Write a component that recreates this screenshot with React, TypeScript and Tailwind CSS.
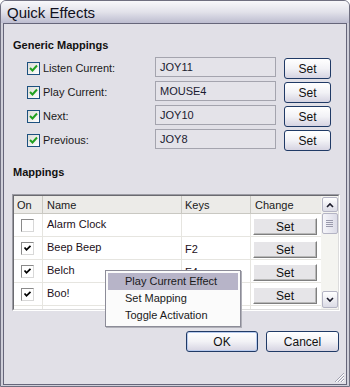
import React from "react";

const font = { fontFamily: '"Liberation Sans", Arial, sans-serif' };

function XpCheck() {
  return (
    <div className="w-[13px] h-[13px] border border-[#1c5180] bg-gradient-to-br from-[#dcdcd7] to-[#ffffff] flex items-center justify-center shrink-0">
      <svg width="9" height="9" viewBox="0 0 9 9">
        <path d="M1 4 L3.5 6.5 L8 1.5" stroke="#21a121" strokeWidth="2" fill="none" />
      </svg>
    </div>
  );
}

function ClassicCheck({ checked }: { checked: boolean }) {
  return (
    <div className="w-[13px] h-[13px] border border-t-[#8a8a8a] border-l-[#8a8a8a] border-r-[#d8d8d8] border-b-[#d8d8d8] bg-white flex items-center justify-center shrink-0">
      {checked && (
        <svg width="9" height="9" viewBox="0 0 9 9">
          <path d="M1.5 3.5 L3.5 5.8 L7.5 1.8" stroke="#000" strokeWidth="1.8" fill="none" />
        </svg>
      )}
    </div>
  );
}

function XpButton({ label, w, h, def }: { label: string; w: string; h: string; def?: boolean }) {
  return (
    <div
      className={`${w} ${h} rounded-[3px] border border-[#203a66] bg-gradient-to-b from-[#ffffff] via-[#f2f2f6] to-[#d6d4e2] flex items-center justify-center text-[12px] text-[#111] shrink-0 ${def ? "shadow-[inset_0_0_0_1px_#b8cbee]" : ""}`}
    >
      {label}
    </div>
  );
}

function ClassicSet() {
  return (
    <div className="w-[64px] h-[17px] mt-[4px] ml-[2px] border border-t-[#ffffff] border-l-[#ffffff] border-r-[#7f7f7f] border-b-[#7f7f7f] bg-[#e6e5e8] shadow-[inset_-1px_-1px_0_#b8b8b8] flex items-center justify-center text-[12px] text-[#111]">
      Set
    </div>
  );
}

const generic = [
  ["Listen Current:", "JOY11"],
  ["Play Current:", "MOUSE4"],
  ["Next:", "JOY10"],
  ["Previous:", "JOY8"],
];

const rows: [boolean, string, string][] = [
  [false, "Alarm Clock", ""],
  [true, "Beep Beep", "F2"],
  [true, "Belch", "F4"],
  [true, "Boo!", ""],
  [false, "Buzzer", ""],
];

export default function App() {
  return (
    <div style={font} className="w-[350px] h-[387px] bg-[#cfcfd9] border border-[#6f6f80] rounded-t-[6px] flex flex-col overflow-hidden">
      <div className="h-[22px] bg-gradient-to-b from-[#f8f8fb] via-[#e2e2ea] to-[#bdbdd0] pl-[6px] pt-[3px] text-[15px] leading-[18px] text-[#101020] shrink-0">
        Quick Effects
      </div>
      <div className="relative flex-1 mx-[2px] mb-[1px] border border-[#66667a] bg-[#e1e0e7] flex flex-col">
        <div className="pl-[9px] pt-[14px] text-[11px] font-bold leading-[14px] text-[#111]">Generic Mappings</div>
        <div className="flex flex-col gap-[2px] mt-[5px]">
          {generic.map(([l, v]) => (
            <div key={l} className="h-[22px] flex items-start">
              <div className="ml-[23px] mt-[5px]">
                <XpCheck />
              </div>
              <div className="ml-[3px] mt-[5px] w-[112px] text-[11px] leading-[13px] text-[#1a1a1a]">{l}</div>
              <div className="w-[121px] h-[20px] border border-[#a4a4ae] bg-[#e4e3e9] pl-[4px] text-[11px] leading-[18px] text-[#1a1a30]">
                {v}
              </div>
              <div className="ml-[8px] mt-[1px]">
                <XpButton label="Set" w="w-[47px]" h="h-[21px]" />
              </div>
            </div>
          ))}
        </div>
        <div className="pl-[9px] mt-[14px] text-[11px] font-bold leading-[14px] text-[#111]">Mappings</div>
        <div className="ml-[8px] mt-[15px] w-[328px] h-[117px] border border-t-[#9c9ca4] border-l-[#9c9ca4] border-r-[#ffffff] border-b-[#ffffff] flex">
          <div className="flex-1 flex border border-t-[#6a6a70] border-l-[#6a6a70] border-r-[#dcdcdc] border-b-[#dcdcdc] bg-white overflow-hidden">
            <div className="flex-1 flex flex-col overflow-hidden">
              <div className="h-[18px] shrink-0 grid grid-cols-[29px_139px_69px_69px] bg-[#ecebe8] border-b border-[#c9c8c2] text-[11px] leading-[18px] text-[#1a1a1a]">
                <div className="pl-[3px] border-r border-[#c9c8c2]">On</div>
                <div className="pl-[4px] border-r border-[#c9c8c2]">Name</div>
                <div className="pl-[3px] border-r border-[#c9c8c2]">Keys</div>
                <div className="pl-[4px]">Change</div>
              </div>
              {rows.map(([c, n, k]) => (
                <div key={n} className="h-[23px] shrink-0 grid grid-cols-[29px_139px_69px_69px] border-b border-[#e6e5e0] text-[11px] text-[#1c1020]">
                  <div className="pl-[7px] pt-[5px] border-r border-[#e6e5e0]">
                    <ClassicCheck checked={c} />
                  </div>
                  <div className="pl-[4px] pt-[2px] leading-[16px] border-r border-[#e6e5e0]">{n}</div>
                  <div className="pl-[3px] pt-[4px] leading-[16px] border-r border-[#e6e5e0]">{k}</div>
                  <div>
                    <ClassicSet />
                  </div>
                </div>
              ))}
            </div>
            <div className="w-[17px] shrink-0 bg-[#f4f4f0] flex flex-col items-center py-[1px]">
              <div className="w-[16px] h-[15px] rounded-[2px] border border-[#b4b4c4] bg-gradient-to-b from-[#ffffff] to-[#dcdce6] flex items-center justify-center">
                <svg width="8" height="6" viewBox="0 0 8 6">
                  <path d="M1 5 L4 2 L7 5" stroke="#1a1a2a" strokeWidth="1.6" fill="none" />
                </svg>
              </div>
              <div className="w-[16px] h-[21px] mt-[1px] rounded-[2px] border border-[#b4b4c4] bg-gradient-to-r from-[#f6f6fa] to-[#dcdce8] flex flex-col items-center justify-center gap-[1px]">
                <div className="w-[7px] h-[1px] bg-[#9a9aac]" />
                <div className="w-[7px] h-[1px] bg-[#9a9aac]" />
                <div className="w-[7px] h-[1px] bg-[#9a9aac]" />
                <div className="w-[7px] h-[1px] bg-[#9a9aac]" />
              </div>
              <div className="flex-1" />
              <div className="w-[16px] h-[17px] rounded-[2px] border border-[#b4b4c4] bg-gradient-to-b from-[#ffffff] to-[#dcdce6] flex items-center justify-center">
                <svg width="8" height="6" viewBox="0 0 8 6">
                  <path d="M1 1 L4 4 L7 1" stroke="#1a1a2a" strokeWidth="1.6" fill="none" />
                </svg>
              </div>
            </div>
          </div>
        </div>
        <div className="flex justify-end gap-[8px] pr-[7px] mt-[20px]">
          <XpButton label="OK" w="w-[72px]" h="h-[21px]" def />
          <XpButton label="Cancel" w="w-[73px]" h="h-[21px]" />
        </div>

        <div className="absolute left-[101px] top-[246px] w-[136px] h-[57px] bg-[#fbfbfb] border border-[#8c8c98] shadow-[1px_1px_0_#b0b0b8] py-[2px] px-[2px] text-[11px] text-[#1a1a1a]">
          <div className="h-[17px] bg-[#b7b4c8] pl-[17px] leading-[17px]">Play Current Effect</div>
          <div className="h-[17px] pl-[17px] leading-[17px]">Set Mapping</div>
          <div className="h-[17px] pl-[17px] leading-[17px]">Toggle Activation</div>
        </div>

        <svg className="absolute right-[1px] bottom-[1px]" width="12" height="12" viewBox="0 0 12 12">
          <path d="M11 2 L2 11 M11 5 L5 11 M11 8 L8 11" stroke="#a0a0b0" strokeWidth="1" />
          <path d="M11 3 L3 11 M11 6 L6 11 M11 9 L9 11" stroke="#ffffff" strokeWidth="1" />
        </svg>
      </div>
    </div>
  );
}
